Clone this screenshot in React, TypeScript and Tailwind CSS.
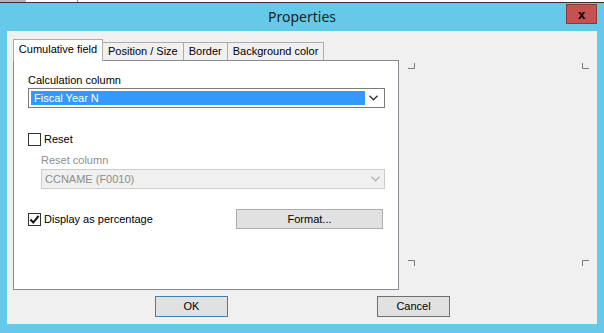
import React from 'react';

const Chevron: React.FC<{ color: string }> = ({ color }) => (
  <svg width="9" height="6" viewBox="0 0 9 6" fill="none">
    <path d="M0.5 0.8 L4.5 4.8 L8.5 0.8" stroke={color} strokeWidth="1.4" />
  </svg>
);

const Check: React.FC = () => (
  <svg width="11" height="11" viewBox="0 0 11 11" fill="none">
    <path d="M1.5 5.5 L4.3 8.5 L9.6 1.8" stroke="#111" strokeWidth="2" />
  </svg>
);

const Corner: React.FC<{ d: string }> = ({ d }) => (
  <svg width="7" height="6" viewBox="0 0 7 6" fill="none">
    <path d={d} stroke="#7a7a7a" strokeWidth="1" />
  </svg>
);

const Tab: React.FC<{ label: string; active?: boolean }> = ({ label, active }) =>
  active ? (
    <div className="relative z-10 -mb-px flex h-[22px] w-[90px] items-start justify-center border border-b-0 border-[#acacac] bg-white pt-[3px]">
      {label}
    </div>
  ) : (
    <div className="flex h-[18px] items-center border border-b-0 border-l-0 border-[#acacac] bg-[#f0f0f0] px-[5px]">
      {label}
    </div>
  );

export default function App() {
  return (
    <div
      className="flex h-[333px] w-[604px] flex-col bg-[#65caea] text-[11px] leading-[13px] text-black"
      style={{ fontFamily: '"Liberation Sans", Arial, sans-serif' }}
    >
      <div className="flex h-[3px] border-b border-[#333]">
        <div className="w-[26px] bg-[#b5b5b5]" />
        <div className="w-[52px] border-r border-[#888] bg-white" />
        <div className="flex-1 bg-white" />
      </div>
      <div className="flex h-[28px] items-start">
        <div className="w-[38px]" />
        <div className="flex-1 pt-[4px] text-center text-[14px] leading-[20px] text-[#1e1e1e]" style={{ fontFamily: '"Noto Sans", sans-serif' }}>
          Properties
        </div>
        <div className="mr-[7px] mt-px flex h-[20px] w-[31px] items-center justify-center border border-[#8a3a3a] bg-[#c75050] text-[13px] font-bold text-black">
          x
        </div>
      </div>
      <div className="mx-[7px] flex h-[293px] flex-col bg-[#f0f0f0]">
        <div className="flex pl-[6px] pt-[8px]">
          <div className="flex w-[386px] flex-col">
            <div className="flex items-end">
              <Tab label="Cumulative field" active />
              <Tab label="Position / Size" />
              <Tab label="Border" />
              <Tab label="Background color" />
            </div>
            <div className="h-[230px] border border-[#898c95] bg-white px-[14px]">
              <div className="mt-[13px]">Calculation column</div>
              <div className="mt-px flex h-[20px] w-[357px] items-center border border-[#7a7a7a] bg-white p-[2px]">
                <div className="flex h-full flex-1 items-center bg-[#3399ff] pl-[3px] text-white">Fiscal Year N</div>
                <div className="flex w-[17px] justify-center">
                  <Chevron color="#333" />
                </div>
              </div>
              <div className="mt-[25px] flex items-center gap-[3px]">
                <div className="h-[13px] w-[13px] border border-[#333] bg-white" />
                <span>Reset</span>
              </div>
              <div className="ml-[13px] mt-[8px] text-[#8d8d8d]">Reset column</div>
              <div className="ml-[13px] mt-[2px] flex h-[20px] w-[344px] items-center border border-[#cccccc] bg-[#f0f0f0] pl-[3px] text-[#8d8d8d]">
                <span className="flex-1">CCNAME (F0010)</span>
                <div className="flex w-[17px] justify-center">
                  <Chevron color="#b5b5b5" />
                </div>
              </div>
              <div className="mt-[20px] flex h-[20px] items-center">
                <div className="flex items-center gap-[3px]">
                  <div className="flex h-[13px] w-[13px] items-center justify-center border border-[#333] bg-white">
                    <Check />
                  </div>
                  <span>Display as percentage</span>
                </div>
                <div className="ml-auto mr-[1px] flex h-[20px] w-[147px] items-center justify-center border border-[#adadad] bg-[#e1e1e1]">
                  Format...
                </div>
              </div>
            </div>
          </div>
          <div className="ml-[9px] mt-[24px] flex h-[203px] w-[181px] flex-col justify-between">
            <div className="flex justify-between">
              <Corner d="M0 5.5 H6.5 V0" />
              <Corner d="M0.5 0 V5.5 H7" />
            </div>
            <div className="flex justify-between">
              <Corner d="M0 0.5 H6.5 V6" />
              <Corner d="M0.5 6 V0.5 H7" />
            </div>
          </div>
        </div>
        <div className="mt-[6px] flex">
          <div className="ml-[148px] flex h-[21px] w-[73px] items-center justify-center border border-[#3c7fb1] bg-[#e1e1e1]">OK</div>
          <div className="ml-[149px] flex h-[21px] w-[73px] items-center justify-center border border-[#707070] bg-[#e1e1e1]">Cancel</div>
        </div>
      </div>
    </div>
  );
}
